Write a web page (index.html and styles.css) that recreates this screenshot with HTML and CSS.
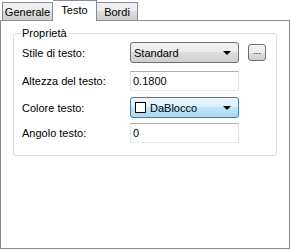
FILE: index.html
```html
<!DOCTYPE html>
<html>
<head>
<meta charset="utf-8">
<link rel="stylesheet" href="styles.css">
</head>
<body>
<div class="dialog">
  <div class="tabs">
    <div class="tab tab-first">Generale</div>
    <div class="tab tab-active">Testo</div>
    <div class="tab tab-last">Bordi</div>
  </div>
  <div class="panel">
    <fieldset class="group">
      <legend>Proprietà</legend>
      <div class="row row-1">
        <span class="label">Stile di testo:</span>
        <div class="combo"><span class="combo-text">Standard</span><span class="arrow"></span></div>
        <div class="dots">...</div>
      </div>
      <div class="row row-2">
        <span class="label">Altezza del testo:</span>
        <div class="textbox">0.1800</div>
      </div>
      <div class="row row-3">
        <span class="label">Colore testo:</span>
        <div class="combo combo-hot"><span class="swatch"></span><span class="combo-text">DaBlocco</span><span class="arrow"></span></div>
      </div>
      <div class="row row-4">
        <span class="label">Angolo testo:</span>
        <div class="textbox">0</div>
      </div>
    </fieldset>
  </div>
</div>
</body>
</html>
```
FILE: styles.css
```css
* { box-sizing: border-box; }
html, body { margin: 0; padding: 0; background: #ffffff; }
body {
  font-family: "Liberation Sans", Arial, sans-serif;
  font-size: 11px;
  color: #000;
  width: 291px;
  height: 250px;
  overflow: hidden;
}
.dialog { width: 290px; height: 249px; display: flex; flex-direction: column; }
.tabs {
  display: flex;
  align-items: flex-end;
  height: 20px;
  padding-left: 2px;
}
.tab {
  height: 18px;
  border: 1px solid #898c95;
  border-bottom: none;
  background: linear-gradient(#f2f2f2 0%, #ebebeb 50%, #dddddd 50%, #cfcfcf 100%);
  display: flex;
  align-items: center;
  justify-content: center;
  line-height: 13px;
  padding-top: 1px;
}
.tab-first { width: 51px; }
.tab-last { width: 41px; border-left: none; }
.tab-active {
  width: 44px;
  height: 21px;
  margin-bottom: -1px;
  background: #ffffff;
  border-left: none;
  position: relative;
  z-index: 1;
  align-items: flex-start;
  padding-top: 3px;
}
.panel {
  flex: 1;
  border: 1px solid #898c95;
  background: #ffffff;
  padding: 6px 12px 0 12px;
}
.group {
  margin: 0;
  border: 1px solid #d5dfe5;
  border-radius: 3px;
  padding: 2px 0 12px 6px;
  height: 129px;
}
.group legend {
  padding: 0 2px;
  line-height: 13px;
}
.row {
  display: flex;
  align-items: center;
  padding-left: 2px;
}
.label { width: 108px; flex: none; }
.row-1 { height: 21px; }
.row-2 { height: 20px; margin-top: 8px; }
.row-3 { height: 21px; margin-top: 6px; }
.row-4 { height: 20px; margin-top: 5px; }
.combo {
  width: 109px;
  height: 21px;
  border: 1px solid #707070;
  border-radius: 3px;
  background: linear-gradient(#f2f2f2 0%, #ebebeb 50%, #dddddd 50%, #cfcfcf 100%);
  display: flex;
  align-items: center;
  padding: 0 4px 0 3px;
}
.combo-hot {
  border-color: #3c7fb1;
  background: linear-gradient(#eaf6fd 0%, #d9f0fc 50%, #bee6fd 50%, #a7d9f5 100%);
  padding-left: 4px;
}
.combo-text { flex: 1; }
.swatch {
  width: 11px;
  height: 11px;
  border: 1px solid #000;
  background: #fff;
  margin-right: 4px;
  flex: none;
}
.arrow {
  width: 0;
  height: 0;
  border-left: 4px solid transparent;
  border-right: 4px solid transparent;
  border-top: 4px solid #000;
  margin-right: 3px;
}
.dots {
  width: 18px;
  height: 17px;
  margin-left: 9px;
  border: 1px solid #707070;
  border-radius: 3px;
  background: linear-gradient(#f2f2f2 0%, #ebebeb 50%, #dddddd 50%, #cfcfcf 100%);
  font-size: 9px;
  line-height: 12px;
  text-align: center;
  color: #000;
}
.textbox {
  width: 109px;
  height: 20px;
  border: 1px solid #e3e9ef;
  border-top-color: #abadb3;
  border-left-color: #e2e3ea;
  border-right-color: #dbdfe6;
  background: #fff;
  display: flex;
  align-items: center;
  padding-left: 2px;
}
```
